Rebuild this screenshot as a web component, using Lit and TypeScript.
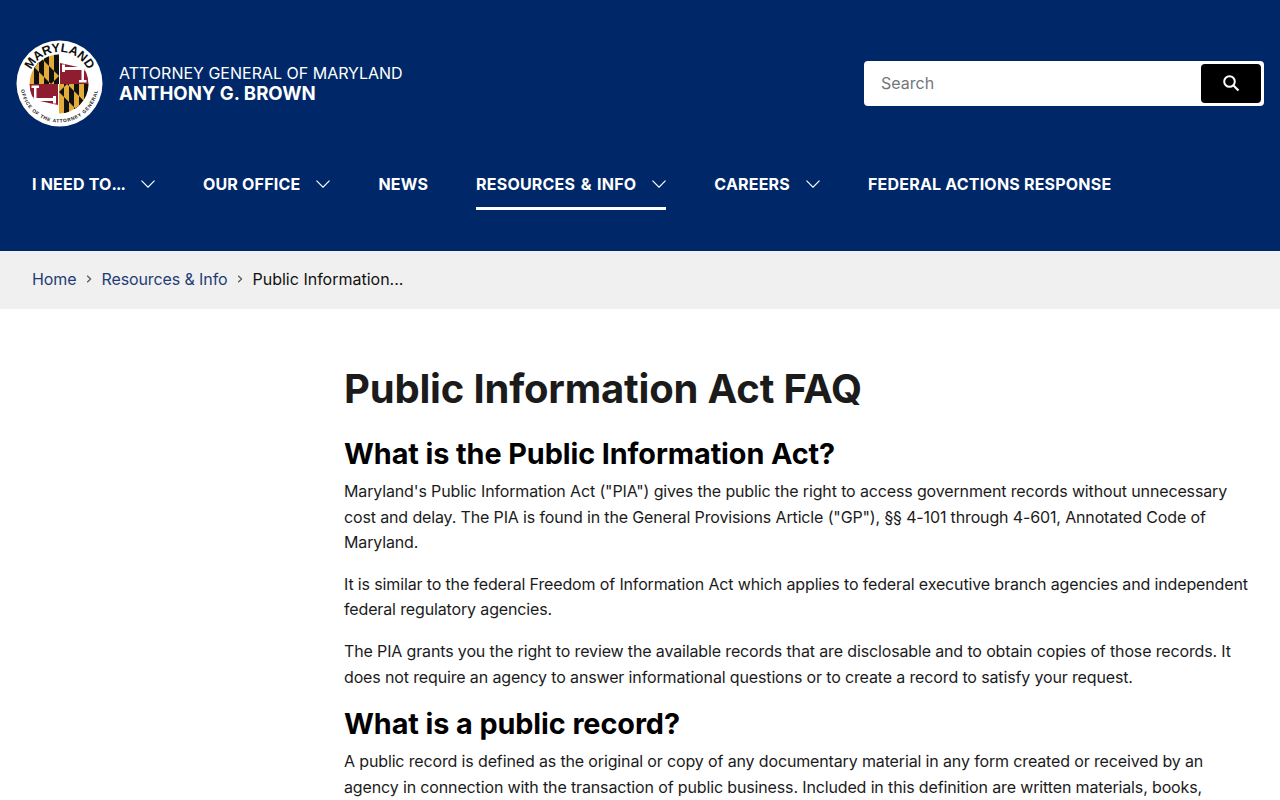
import { LitElement, html, css, svg } from "lit";
import { customElement } from "lit/decorators.js";

const chev = html`<svg class="chev" viewBox="0 0 14 8" width="14" height="8"><path d="M.5 .7l6.500 6.500L13.500 .7" fill="none" stroke="#fff" stroke-width="1.200"/></svg>`;
const sep = html`<svg class="sep" viewBox="0 0 6 8" width="6" height="8"><path d="M1.200 .8L4.600 4 1.200 7.200" fill="none" stroke="#555" stroke-width="1.200"/></svg>`;

const GOLD = "#e3ac3a";
const RED = "#8f1d2f";
const calvert = svg`
  <rect width="30" height="30" fill="${GOLD}"/>
  <path d="M5 0h5v30H5zM15 0h5v30h-5zM25 0h5v30h-5z" fill="#111"/>
  <g clip-path="url(#band)">
    <rect width="30" height="30" fill="#111"/>
    <path d="M5 0h5v30H5zM15 0h5v30h-5zM25 0h5v30h-5z" fill="${GOLD}"/>
  </g>`;
const crossland = svg`
  <rect width="30" height="30" fill="#fff"/>
  <path d="M1 9L28 15 30 30H1z" fill="${RED}"/>
  <path d="M3 10.500h3V13h16V11h3v3.500h2v2h-2V26h2.500v2.500H20V26h2.500V16H6v2H3z" fill="#fff"/>`;

@customElement("app-root")
export class AppRoot extends LitElement {
  static styles = css`
    :host { display: block; font-family: "Inter", "Liberation Sans", sans-serif; color: #1b1b1b; height: 800px; overflow: hidden; }
    a { color: inherit; text-decoration: none; }
    .hdr { background: #002868; height: 251px; color: #fff; box-sizing: border-box; display: flex; flex-direction: column; }
    .top { display: flex; justify-content: space-between; align-items: center; padding: 39px 16px 0 16px; height: 88px; box-sizing: content-box; }
    .brand { display: flex; align-items: center; gap: 16px; }
    .seal { display: block; width: 87px; height: 87px; }
    .titles { display: flex; flex-direction: column; font-size: 16px; line-height: 20px; }
    .titles span { margin-top: -1px; }
    .titles b { font-size: 18.600px; font-weight: 700; }
    .search { width: 400px; height: 45px; background: #fff; border-radius: 4px; display: flex; align-items: center; justify-content: space-between; padding: 3px; box-sizing: border-box; }
    .search span { color: #71767a; font-size: 16px; padding-left: 14px; }
    .sbtn { width: 60px; height: 39px; background: #000; border-radius: 4px; display: flex; align-items: center; justify-content: center; }
    nav { display: flex; gap: 48px; padding: 29px 32px 0; }
    nav a { display: flex; align-items: center; gap: 16px; font-size: 16px; font-weight: 700; letter-spacing: .2px; height: 54px; padding-top: 10px; box-sizing: border-box; border-bottom: 3px solid transparent; padding-bottom: 5px; }
    nav a.on { border-bottom-color: #fff; word-spacing: 1.500px; }
    .dots { letter-spacing: -.9px; }
    .crumbs { background: #f0f0f0; height: 58px; display: flex; align-items: center; padding: 0 32px 2px; box-sizing: border-box; font-size: 16px; gap: 9.500px; }
    .crumbs a { color: #1e3d77; letter-spacing: -.1px; }
    .crumbs span { color: #111; }
    main { padding: 0 24px 0 344px; }
    h1 { font-size: 40px; line-height: 48px; font-weight: 700; letter-spacing: -.19px; margin: 56px 0 0; color: #1b1b1b; }
    h2 { font-size: 28.800px; line-height: 36px; font-weight: 700; letter-spacing: -.08px; margin: 0; color: #000; }
    h1 + h2 { margin-top: 23px; }
    p { font-size: 16px; line-height: 25.600px; letter-spacing: -.14px; margin: 0 0 16px; color: #1b1b1b; }
    h2 + p { margin-top: 7px; }
  `;

  render() {
    return html`
      <header class="hdr">
        <div class="top">
          <a class="brand" href="#">
            <svg class="seal" viewBox="0 0 87 87">
              <circle cx="43.500" cy="43.500" r="43" fill="#fff"/>
              <defs>
                <path id="arcT" d="M12 43.500a31.500 31.500 0 0 1 63 0"/>
                <path id="arcB" d="M4.500 43.500a39 39 0 0 0 78 0"/>
                <clipPath id="cc"><circle cx="43" cy="44" r="29.500"/></clipPath>
                <clipPath id="band"><path d="M0 8L8 0 30 22 22 30z"/></clipPath>
              </defs>
              <g clip-path="url(#cc)">
                <g transform="translate(13 14)">${calvert}</g>
                <g transform="translate(43 14)">${crossland}</g>
                <g transform="rotate(180 43 44) translate(43 14)">${crossland}</g>
                <g transform="translate(43 44)">${calvert}</g>
              </g>
              <text font-family="Liberation Sans" font-weight="700" font-size="12.500" fill="#111" text-anchor="middle"><textPath href="#arcT" startOffset="50%">MARYLAND</textPath></text>
              <text font-family="Liberation Sans" font-weight="700" font-size="4.800" letter-spacing=".7" fill="#111" text-anchor="middle"><textPath href="#arcB" startOffset="50%">OFFICE OF THE ATTORNEY GENERAL</textPath></text>
            </svg>
            <div class="titles"><span>ATTORNEY GENERAL OF MARYLAND</span><b>ANTHONY G. BROWN</b></div>
          </a>
          <div class="search">
            <span>Search</span>
            <div class="sbtn"><svg viewBox="0 0 18 18" width="18" height="18"><circle cx="7.500" cy="7.500" r="5.300" fill="none" stroke="#fff" stroke-width="2"/><path d="M11.500 11.500l5 5" stroke="#fff" stroke-width="2.200"/></svg></div>
          </div>
        </div>
        <nav>
          <a href="#"><span>I NEED TO<span class="dots">...</span></span> ${chev}</a>
          <a href="#">OUR OFFICE ${chev}</a>
          <a href="#">NEWS</a>
          <a href="#" class="on">RESOURCES &amp; INFO ${chev}</a>
          <a href="#">CAREERS ${chev}</a>
          <a href="#">FEDERAL ACTIONS RESPONSE</a>
        </nav>
      </header>
      <div class="crumbs"><a href="#">Home</a>${sep}<a href="#">Resources &amp; Info</a>${sep}<span>Public Information...</span></div>
      <main>
        <h1>Public Information Act FAQ</h1>
        <h2>What is the Public Information Act?</h2>
        <p>Maryland's Public Information Act ("PIA") gives the public the right to access government records without unnecessary cost and delay. The PIA is found in the General Provisions Article ("GP"), §§ 4-101 through 4-601, Annotated Code of Maryland.</p>
        <p>It is similar to the federal Freedom of Information Act which applies to federal executive branch agencies and independent federal regulatory agencies.</p>
        <p>The PIA grants you the right to review the available records that are disclosable and to obtain copies of those records. It does not require an agency to answer informational questions or to create a record to satisfy your request.</p>
        <h2>What is a public record?</h2>
        <p>A public record is defined as the original or copy of any documentary material in any form created or received by an agency in connection with the transaction of public business. Included in this definition are written materials, books,</p>
      </main>
    `;
  }
}
